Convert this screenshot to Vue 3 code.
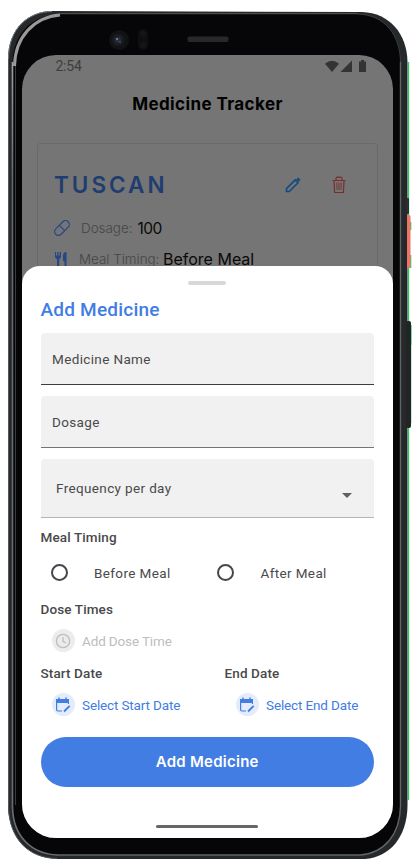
<script setup>
import { ref } from 'vue'

const timing = ref('')
const timings = ['Before Meal', 'After Meal']
const dates = ['Start Date', 'End Date']
</script>

<template>
  <main class="stage">
    <svg class="frame" width="415" height="868" viewBox="0 0 415 868" fill="none" aria-hidden="true">
      <defs>
        <linearGradient id="shine" x1="0" y1="0" x2="0" y2="1">
          <stop offset="0" stop-color="#a0a0a0" />
          <stop offset=".15" stop-color="#65686b" />
          <stop offset="1" stop-color="#6b6d6e" />
        </linearGradient>
      </defs>
      <path d="M408.500 62V800" stroke="#35c964" stroke-width="1.400" />
      <path d="M410.700 222V230M410.700 255V268M411 325V345" stroke="#2bc75c" stroke-width="1.200" />
      <path d="M411 345V423" stroke="#8fd9a6" />
      <path d="M8 59C8 28 29 11 52 11L362 12C390 13 407 34 407.500 62V806C407 837 390 857 365 859H57C29 858 10 840 8 808Z" fill="#26292b" />
      <rect x="406.500" y="198" width="2.500" height="16" rx="1" fill="#2b3031" />
      <rect x="407" y="215" width="3.500" height="53" rx="1.500" fill="#ed7565" />
      <rect x="406" y="321" width="5" height="107" rx="2" fill="#222425" />
      <path d="M8.500 59C8.500 28 29 11.500 52 11.500" stroke="#77797b" />
      <path d="M8.500 59V808C10 840 29 858 57 858.500" stroke="#55585b" />
      <path d="M12.500 62C13 34 33 14.500 58 14.500H358C385 15 400 35 400.500 62V806C400 834 385 853 360 855H58C31 854 13 836 12.500 807Z" fill="#060608" />
      <path d="M58 855C31 854 13 836 12.500 807V62" stroke="url(#shine)" stroke-width="1.600" />
      <path d="M400.500 62V806C400 834 385 853 360 855H58" stroke="#626466" stroke-width="1.400" />
      <path d="M15.500 64V805" stroke="#3a3c3e" />
      <path d="M14.500 66C15 37 34 17 60 15" stroke="#9a9a9a" stroke-width="3" />
      <path d="M60 13.500H358" stroke="#4c4c4c" stroke-width="1.200" />
      <path d="M358 14C385 15 400 35 400.500 62" stroke="#3a3c3e" />
      <circle cx="119" cy="40" r="10" fill="#111213" />
      <circle cx="118" cy="40" r="6" fill="#1b1d1f" />
      <circle cx="118" cy="40" r="3" fill="#282e43" />
      <circle cx="117" cy="39" r="1" fill="#858b96" />
      <circle cx="120" cy="42" r="1" fill="#35446f" />
      <rect x="138" y="29" width="10" height="21" rx="5" fill="#0e0f10" />
      <circle cx="143" cy="34" r="3" fill="#141517" />
      <circle cx="143" cy="45" r="3" fill="#141517" />
      <rect x="187.500" y="36.500" width="41" height="5.500" rx="2" fill="#282828" />
    </svg>

    <section class="screen">
      <div class="backdrop">
        <header class="status">
          <span>2:54</span>
          <svg width="43" height="14" viewBox="0 0 43 14" fill="#343434">
            <path d="M1 3.700Q8 -2.200 15 3.700L8 12Z" />
            <path d="M16.500 12 28 .5V12Z" />
            <path d="M35 1.500H37V0H40V1.500H42V12H35Z" />
          </svg>
        </header>
        <h1>Medicine Tracker</h1>
        <article class="card">
          <div class="card-head">
            <h2>TUSCAN</h2>
            <svg class="pencil" width="16" height="16" viewBox="0 0 16 16" fill="none" stroke="#104b80" stroke-width="1.600">
              <path d="M1.500 14.500V11.700L10.200 3 13 5.800 4.300 14.500Z" />
              <path d="M11.500 2.300 12.700 1.200Q13.200 .8 13.700 1.200L14.900 2.400Q15.300 2.900 14.900 3.300L13.700 4.500Z" fill="#104b80" stroke-width=".6" />
            </svg>
            <svg class="trash" width="14" height="18" viewBox="0 0 14 18" fill="none" stroke="#792d2d" stroke-width="1.200">
              <path d="M.5 4.500H13.500M4 4V2.500Q4 1.200 5.500 1.200H8.500Q10 1.200 10 2.500V4M2 4.500 2.600 16.500H11.400L12 4.500" />
              <path d="M4.800 6.500 5 14M7 6.500V14M9.200 6.500 9 14" stroke-width=".9" />
            </svg>
          </div>
          <p class="detail dosage">
            <svg width="16" height="16" viewBox="0 0 16 16" fill="none" stroke="#264985" stroke-width="1.200">
              <rect x="-.8" y="4.200" width="17.600" height="7.600" rx="3.800" transform="rotate(-45 8 8)" />
              <path d="m5.300 5.300 5.400 5.400" />
            </svg>
            <span>Dosage:</span><b>100</b>
          </p>
          <p class="detail meal">
            <svg width="15" height="18" viewBox="0 0 15 18" fill="#254783">
              <path d="M1 2H2V5.500H3.200V2H4.500V5.500H5.700V2H7V6.500Q7 8.500 5.200 9V17.500H3V9Q1 8.500 1 6.500ZM12.500 2V17.500H10.500V11H9V6Q9 2 12.500 2Z" />
            </svg>
            <span>Meal Timing:</span><b>Before Meal</b>
          </p>
        </article>
      </div>

      <form class="sheet" @submit.prevent>
        <div class="handle"></div>
        <h3>Add Medicine</h3>
        <div class="fields">
          <div class="field name"><span>Medicine Name</span></div>
          <div class="field dose"><span>Dosage</span></div>
          <div class="field frequency">
            <span>Frequency per day</span>
            <i class="caret"></i>
          </div>
        </div>

        <h4 class="timing-title">Meal Timing</h4>
        <div class="radios">
          <label v-for="item in timings" :key="item" @click="timing = item">
            <i class="radio" :class="{ picked: timing === item }"></i><span>{{ item }}</span>
          </label>
        </div>

        <h4 class="dose-title">Dose Times</h4>
        <div class="chip muted">
          <span class="bubble">
            <svg width="16" height="16" viewBox="0 0 16 16" fill="none" stroke="currentColor" stroke-width="1.300">
              <circle cx="8" cy="8" r="6.600" /><path d="M8 4V8.300L11 10" />
            </svg>
          </span>
          <span class="chip-text">Add Dose Time</span>
        </div>

        <div class="dates">
          <div v-for="item in dates" :key="item" class="date">
            <h4>{{ item }}</h4>
            <div class="chip">
              <span class="bubble">
                <svg width="16" height="16" viewBox="0 0 16 16" fill="none" stroke="currentColor">
                  <path d="M1 2H14V6H1Z" fill="currentColor" stroke="none" />
                  <path d="M4 .5V3M11 .5V3" stroke-width="1.500" />
                  <path d="M1.600 5V12.800Q1.600 14 2.800 14H7M13.400 5V7" stroke-width="1.200" />
                  <path d="M9 14.500 14.700 8.800" stroke-width="1.900" />
                </svg>
              </span>
              <span class="chip-text">Select {{ item }}</span>
            </div>
          </div>
        </div>

        <button type="submit">Add Medicine</button>
        <div class="home"></div>
      </form>
    </section>
  </main>
</template>

<style>
body { margin: 0; background: #fff; overflow: hidden; }
</style>

<style scoped>
* { box-sizing: border-box; }
h1, h2, h3, h4, p { margin: 0; }
.stage {
  position: relative;
  width: 415px;
  height: 868px;
  padding: 55px 22px 30px;
  font-family: Roboto, sans-serif;
  background: #fff;
}
.frame { position: absolute; inset: 0; }
.screen {
  position: relative;
  display: flex;
  flex-direction: column;
  width: 371px;
  height: 783px;
  overflow: hidden;
  border-radius: 34px;
  background: #757575;
}
.backdrop { height: 211px; font-family: Inter, sans-serif; }
.status {
  display: flex;
  justify-content: space-between;
  height: 22px;
  padding: 5px 26px 0 34px;
  font: 14px/14px Roboto, sans-serif;
  color: #3e3e3e;
}
.status span { margin-top: -1px; margin-left: -.5px; letter-spacing: -.25px; }
h1 {
  height: 66px;
  padding-top: 15px;
  font-size: 17px;
  line-height: 24px;
  font-weight: 700;
  letter-spacing: .4px;
  text-align: center;
  color: #000;
}
.card {
  width: 341px;
  height: 240px;
  margin-left: 15px;
  padding: 29px 17px 0 16px;
  border: 1px solid #6a6a6a;
  border-radius: 3px;
}
.card-head { display: flex; align-items: center; height: 24px; }
h2 {
  width: 231px;
  font-size: 22.5px;
  line-height: 24px;
  font-weight: 600;
  letter-spacing: 3px;
  color: #203d70;
}
.trash { margin-left: 31px; }
.detail { display: flex; align-items: center; height: 24px; font-size: 13.4px; font-weight: 300; color: #464646; }
.detail b { font-size: 16px; font-weight: 400; color: #090909; }
.dosage { margin-top: 19px; }
.dosage span { margin-left: 11px; }
.dosage b { margin-left: 5px; font-size: 15.5px; letter-spacing: -.5px; }
.meal { margin-top: 7px; }
.meal span { width: 79px; margin-left: 10px; white-space: nowrap; }
.meal b { margin-left: 5px; }
.sheet {
  position: relative;
  display: flex;
  flex-direction: column;
  height: 572px;
  padding: 15px 19.500px 10px 18.500px;
  border-radius: 18px 18px 0 0;
  background: #fff;
  color: #4a4a4c;
  font-size: 13.5px;
}
.handle { align-self: center; width: 38px; height: 4px; border-radius: 2px; background: #d8d8d8; }
h3 {
  margin-top: 13px;
  font-size: 19px;
  line-height: 24px;
  font-weight: 500;
  letter-spacing: .22px;
  color: #427de3;
}
.fields { display: flex; flex-direction: column; gap: 11px; margin-top: 11px; }
.field {
  display: flex;
  align-items: center;
  width: 333.500px;
  height: 52px;
  padding: 0 12px 0 11.500px;
  border-bottom: 1px solid #3d3d41;
  border-radius: 4px 4px 0 0;
  background: #f1f1f1;
  letter-spacing: .36px;
}
.dose { border-bottom-color: #747474; }
.frequency { height: 59px; padding: 0 22px 0 15.500px; border-color: #b5b5b5; justify-content: space-between; }
.caret { margin-top: 14px; border: 5px solid transparent; border-top: 5px solid #606060; border-bottom: 0; }
h4 { font-size: 13.5px; line-height: 18px; font-weight: 500; letter-spacing: .12px; color: #49494b; }
.timing-title { margin-top: 10px; }
.radios { display: flex; height: 17px; margin-top: 18px; padding-left: 10px; }
.radios label { display: flex; flex: none; align-items: center; width: 166.500px; letter-spacing: .37px; }
.radio { width: 17px; height: 17px; margin-right: 26.500px; border: 2px solid #47464d; border-radius: 50%; }
.picked { box-shadow: inset 0 0 0 3px #fff; background: #427de3; }
.dose-title { margin-top: 19px; }
.chip { display: flex; align-items: center; height: 23px; padding-left: 11px; color: #427de3; }
.bubble { display: grid; place-items: center; width: 23px; height: 23px; border-radius: 50%; background: #e4ecfb; }
.chip-text { margin-left: 7.500px; letter-spacing: -.14px; white-space: nowrap; }
.muted { margin-top: 11px; color: #bdbdbd; }
.muted .bubble { background: #ececec; }
.dates { display: flex; margin-top: 12px; }
.date { width: 184px; flex: none; }
.date .chip { margin-top: 11px; }
button {
  flex: none;
  width: 333.500px;
  height: 50px;
  margin-top: 21px;
  padding: 0;
  border: 0;
  border-radius: 25px;
  background: #427de3;
  color: #fff;
  font: 600 15px/20px Inter, sans-serif;
  letter-spacing: .25px;
}
.home { align-self: center; width: 102px; height: 3px; margin-top: auto; border-radius: 2px; background: #666; }
</style>
